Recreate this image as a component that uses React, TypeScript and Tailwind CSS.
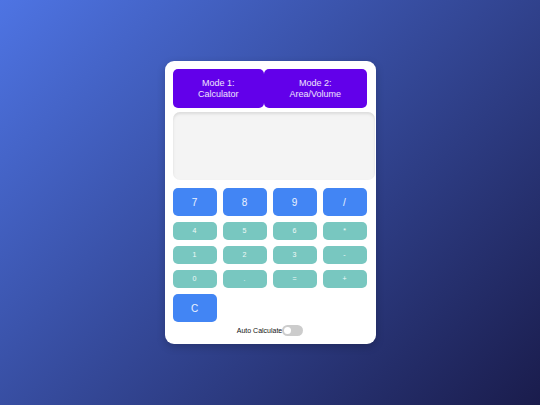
import React, { useState } from 'react'

const keys = ['7', '8', '9', '/', '4', '5', '6', '*', '1', '2', '3', '-', '0', '.', '=', '+', 'C']
const largeKeys = ['7', '8', '9', '/', 'C']

export default function App() {
  const [display, setDisplay] = useState('')
  const [autoCalculate, setAutoCalculate] = useState(false)

  function calculate() {
    const parts = display.match(/^(-?[\d.]+)([-+*/])([\d.]+)$/)
    if (!parts) return
    const a = Number(parts[1])
    const b = Number(parts[3])
    const results: Record<string, number> = { '+': a + b, '-': a - b, '*': a * b, '/': a / b }
    setDisplay(String(results[parts[2]]))
  }

  function handleKey(key: string) {
    if (key === 'C') {
      setDisplay('')
    } else if (key === '=') {
      calculate()
    } else {
      setDisplay(display + key)
    }
  }

  return (
    <div className="flex min-h-screen items-center justify-center bg-linear-[135deg,#4e74e3,#1a1c4c] font-['Liberation_Sans',Arial,sans-serif]">
      <main className="w-full max-w-[211px] rounded-[9px] bg-white p-2 shadow-[0_3px_8px_rgba(0,0,0,0.2)]">
        {/* Mode switch */}
        <div className="mr-px flex">
          <button
            type="button"
            className="grow rounded-[5px] bg-[#6200ea] px-5 pt-[9px] pb-2 text-[9px] leading-[11px] text-white/90"
          >
            Mode 1:
            <br />
            Calculator
          </button>
          <button
            type="button"
            className="grow rounded-[5px] bg-[#6200ea] px-5 pt-[9px] pb-2 text-[9px] leading-[11px] text-white/90"
          >
            Mode 2:
            <br />
            Area/Volume
          </button>
        </div>

        {/* Display runs up to the right edge of the card */}
        <div className="mt-1 -mr-[7px]">
          <input
            type="text"
            aria-label="Display"
            readOnly
            value={display}
            className="block h-[68px] w-full rounded-[7px] bg-[#f4f4f4] px-2 text-right text-xl text-gray-800 shadow-[inset_0_2px_3px_rgba(0,0,0,0.1)] outline-none"
          />
        </div>

        {/* Keypad */}
        <div className="mt-2 mr-px grid grid-cols-4 gap-[6px]">
          {keys.map((key) => (
            <button
              key={key}
              type="button"
              onClick={() => handleKey(key)}
              className={
                largeKeys.includes(key)
                  ? 'h-7 rounded-[5px] bg-[#4285f4] text-[10px] text-white/90'
                  : 'h-[18px] rounded-[5px] bg-[#78c7c0] text-[7px] text-white/90'
              }
            >
              {key}
            </button>
          ))}
        </div>

        <label className="mt-[3px] flex items-center justify-center text-[7px] leading-[11px] text-[#111]">
          Auto Calculate
          <input
            type="checkbox"
            role="switch"
            checked={autoCalculate}
            onChange={(e) => setAutoCalculate(e.target.checked)}
            className="flex h-[11px] w-[21px] appearance-none items-center rounded-full bg-[#ccc] px-[2px] before:size-[7px] before:rounded-full before:bg-white checked:justify-end checked:bg-[#4285f4]"
          />
        </label>
      </main>
    </div>
  )
}
